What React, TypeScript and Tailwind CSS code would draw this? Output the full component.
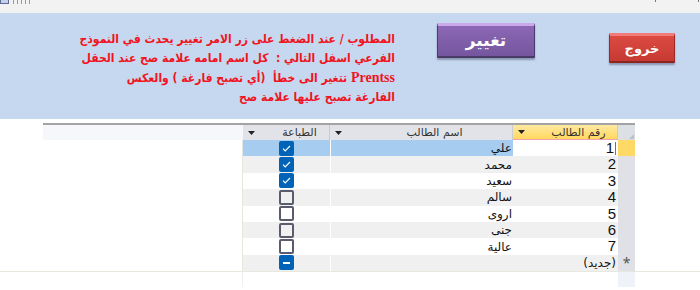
const arabic = { fontFamily: '"DejaVu Sans", "Liberation Sans", sans-serif' };

interface Student {
  id: number;
  name: string;
  printed: boolean;
}

const students: Student[] = [
  { id: 1, name: "علي", printed: true },
  { id: 2, name: "محمد", printed: true },
  { id: 3, name: "سعيد", printed: true },
  { id: 4, name: "سالم", printed: false },
  { id: 5, name: "اروى", printed: false },
  { id: 6, name: "جنى", printed: false },
  { id: 7, name: "عالية", printed: false },
];

const DropArrow = () => (
  <svg width="7" height="4" viewBox="0 0 7 4" className="shrink-0">
    <path d="M0 0h7L3.5 4z" fill="#222" />
  </svg>
);

const CheckBox = ({ state }: { state: "on" | "off" | "new" }) => {
  if (state === "off") {
    return <div className="w-[15px] h-[15px] rounded-[2px] border-2 border-[#5b5b6e] bg-transparent" />;
  }
  return (
    <div className="w-[15px] h-[15px] rounded-[2px] bg-[#0063b8] flex items-center justify-center">
      {state === "on" ? (
        <svg width="9" height="7" viewBox="0 0 9 7">
          <path d="M1 3.6l2.2 2.2L8 1" stroke="#fff" strokeWidth="1.2" fill="none" />
        </svg>
      ) : (
        <div className="w-[7px] h-[2px] bg-white" />
      )}
    </div>
  );
};

const HeaderCell = ({ label, width, yellow }: { label: string; width: string; yellow?: boolean }) => (
  <div
    className={`${width} h-full flex items-center pl-[5px] pr-[3px] gap-1 border-r border-[#c9ccd2] ${
      yellow ? "bg-gradient-to-b from-[#ffe9a0] to-[#ffd95c] border-b border-b-[#f0a0b0]" : "bg-[#e1e3e8]"
    }`}
  >
    <DropArrow />
    <span dir="rtl" style={arabic} className="flex-1 text-center pl-[14px] text-[11px] leading-none text-[#333]">
      {label}
    </span>
  </div>
);

const Row = ({
  bg,
  selected,
  current,
  print,
  name,
  id,
  marker,
}: {
  bg: string;
  selected?: boolean;
  current?: boolean;
  print: React.ReactNode;
  name: string;
  id: React.ReactNode;
  marker?: React.ReactNode;
}) => (
  <div className="flex h-[16.4px]">
    <div className="w-[243px] bg-white border-r border-[#e6e6de]" />
    <div className={`w-[87px] flex items-center justify-center ${selected ? "bg-[#a6cdf0]" : bg}`}>{print}</div>
    <div
      dir="rtl"
      style={arabic}
      className={`w-[183px] flex items-center pr-[1px] text-[12px] text-[#111] border-l border-white ${
        selected ? "bg-[#a6cdf0]" : bg
      }`}
    >
      {name}
    </div>
    <div
      className={`w-[105px] flex items-center justify-end pr-[2px] text-[15px] text-[#111] ${
        current ? "bg-white" : bg
      }`}
      style={{ fontFamily: '"Liberation Sans", "DejaVu Sans", sans-serif' }}
    >
      {id}
    </div>
    <div
      className={`w-[17px] flex items-center justify-center text-[12px] text-[#555] ${
        current ? "bg-[#ffd966]" : "bg-[#dfe1e6]"
      }`}
    >
      {marker}
    </div>
  </div>
);

export default function App() {
  return (
    <div className="w-[700px] h-[290px] overflow-hidden bg-white relative">
      {/* top strip */}
      <div className="h-[13px] bg-[#f2f2f2] relative">
        <div className="absolute left-0 top-[-4px] w-[9px] h-[8px] border border-[#5a6a9a] bg-[#c8d0e8]" />
        <div className="absolute left-[13px] top-0 flex gap-[3px]">
          {[0, 1, 2, 3, 4].map((i) => (
            <div key={i} className="w-[1px] h-[4px] bg-[#9a9a9a]" />
          ))}
        </div>
        <div className="absolute left-[655px] top-0 w-[1px] h-[2px] bg-[#777]" />
        <div className="absolute left-[698px] top-0 w-[1px] h-[2px] bg-[#777]" />
      </div>

      {/* blue command panel */}
      <div className="h-[106px] bg-[#c6d8ef] flex items-start">
        <div
          dir="rtl"
          style={arabic}
          className="w-[320px] ml-[75px] mt-[17px] text-[12px] font-bold font-stretch-condensed leading-[19px] text-[#f0141e] text-right whitespace-nowrap"
        >
          <div>المطلوب / عند الضغط على زر الامر تغيير يحدث في النموذج</div>
          <div>الفرعي اسفل التالي :&nbsp; كل اسم امامه علامة صح عند الحقل</div>
          <div>
            <span className="text-[14px]" style={{ fontFamily: '"Liberation Serif", serif' }}>
              Prentss
            </span>{" "}
            تتغير الى خطأ&nbsp; (أي تصبح فارغة ) والعكس
          </div>
          <div>الفارغة تصبح عليها علامة صح</div>
        </div>

        <button
          style={arabic}
          className="ml-[42px] mt-[10px] w-[98px] h-[35px] rounded-[1px] border-t-[3px] border-t-[#c9a9ea] border-x border-x-[#4d3a6e] border-b-2 border-b-[#4a3a66] bg-gradient-to-b from-[#8d67b5] to-[#74569e] text-white font-bold text-[17px] shadow-[0_2px_2px_#8a96b0]"
        >
          تغيير
        </button>

        <button
          style={arabic}
          className="ml-[74px] mt-[20px] w-[66px] h-[30px] rounded-[1px] border-t-[3px] border-t-[#f27a78] border-x border-x-[#9a2a26] border-b-2 border-b-[#8e2420] bg-gradient-to-b from-[#dc4a42] to-[#c63a33] text-white font-bold text-[13px] shadow-[0_2px_2px_#8a96b0]"
        >
          خروج
        </button>
      </div>

      {/* datasheet */}
      <div className="mt-[4px]">
        <div className="flex h-[17px] border-t-2 border-[#a3a3a3] ml-[43px] w-[592px]">
          <div className="w-[200px] bg-[#f6f7fb]" />
          <HeaderCell label="الطباعة" width="w-[87px]" />
          <HeaderCell label="اسم الطالب" width="w-[183px]" />
          <HeaderCell label="رقم الطالب" width="w-[105px]" yellow />
          <div className="w-[17px] bg-[#dcdfe4] relative">
            <svg width="5" height="5" viewBox="0 0 5 5" className="absolute right-[1px] bottom-[1px]">
              <path d="M5 0v5H0z" fill="#b9c0cc" />
            </svg>
          </div>
        </div>

        {students.map((s, i) => {
          const bg = i % 2 === 0 ? "bg-white" : "bg-[#f0f0f0]";
          return (
            <Row
              key={s.id}
              bg={bg}
              selected={i === 0}
              current={i === 0}
              print={<CheckBox state={s.printed ? "on" : "off"} />}
              name={s.name}
              id={
                <span className="flex items-center">
                  {s.id}
                  {i === 0 && <span className="w-[1px] h-[13px] bg-[#3a7ad8] ml-[1px]" />}
                </span>
              }
            />
          );
        })}
        <Row
          bg="bg-[#f0f0f0]"
          print={<CheckBox state="new" />}
          name=""
          id={
            <span dir="rtl" style={arabic} className="text-[12px]">
              (جديد)
            </span>
          }
          marker={<span className="text-[14px] leading-none">*</span>}
        />
        <div className="flex h-[16px] border-t border-[#e8e8e0]">
          <div className="w-[243px] border-r border-[#eeeeea]" />
          <div className="w-[375px]" />
          <div className="w-[17px] bg-[#f0f2fa]" />
        </div>
      </div>
    </div>
  );
}
